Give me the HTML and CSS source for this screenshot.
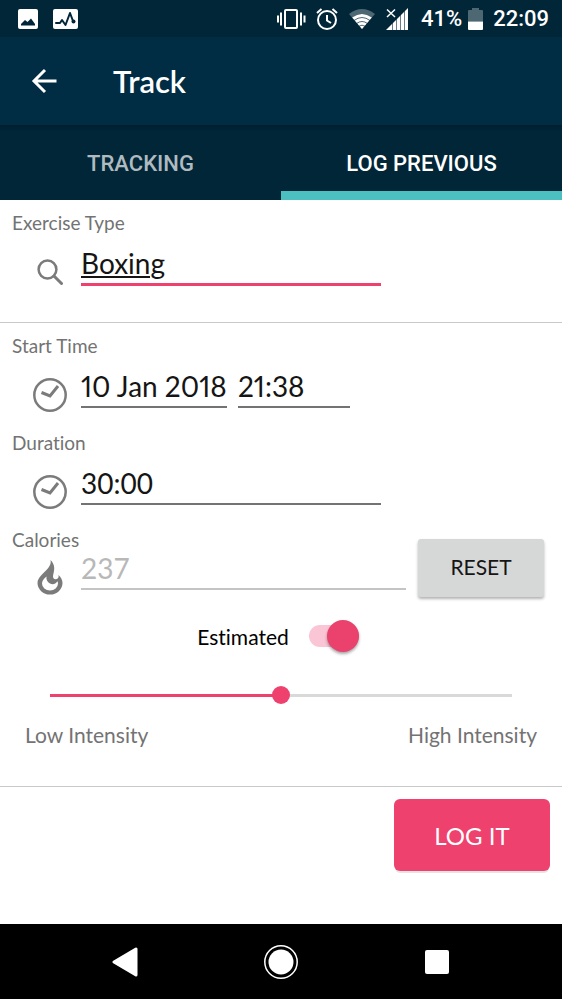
FILE: index.html
```html
<!DOCTYPE html>
<html lang="en">
<head>
<meta charset="utf-8">
<meta name="viewport" content="width=device-width, initial-scale=1">
<title>Track</title>
<link rel="stylesheet" href="styles.css">
</head>
<body>
<div class="screen">
  <div class="status">
    <div class="status-left">
      <svg width="20" height="20" viewBox="0 0 20 20"><rect width="20" height="20" rx="2" fill="#fff"/><path d="M3 16.500v-1.500l4-4 2.500 2 3.500-3.500 4 5.500v1.500z" fill="#002637"/></svg>
      <svg width="25" height="20" viewBox="0 0 25 20"><rect width="25" height="20" rx="2" fill="#fff"/><path d="M3 14h4l2-3 3.500 5L17 4l3 8" fill="none" stroke="#002637" stroke-width="2" stroke-linejoin="round" stroke-linecap="round"/><circle cx="20.500" cy="12.500" r="2" fill="#002637"/></svg>
    </div>
    <div class="status-right">
      <svg width="30" height="24" viewBox="0 0 30 24" fill="none" stroke="#fff" stroke-width="2"><rect x="9" y="3" width="12" height="18" rx="1"/><path d="M5 5.500v13M25 5.500v13M2 8.500v7M28.500 8.500v7"/></svg>
      <svg width="22" height="24" viewBox="0 0 22 24" fill="none" stroke="#fff" stroke-width="2"><circle cx="11" cy="13" r="9"/><path d="M11 8v5.500l4 2.500M1 6l4.500-4M21 6l-4.500-4"/></svg>
      <svg width="28" height="24" viewBox="0 0 28 24"><path d="M1 7Q14-3 27 7L14 22z" fill="#4d6773"/><path d="M4.200 10.500Q14 3.500 23.800 10.500L14 22z" fill="#fff"/><path d="M6 13.500Q14 7.500 22 13.500M8.500 16.500q5.500-4 11 0M11 19.200q3-2 6 0" fill="none" stroke="#002637" stroke-width=".7"/></svg>
      <svg width="24" height="24" viewBox="0 0 24 24"><path d="M0 23L22 1v22z" fill="#fff"/><path d="M6.500 10v13M10.500 8v15M14.500 5v18M18.500 2v21" stroke="#002637" stroke-width=".6"/><path d="M0 0h11v12H0z" fill="#002637"/><path d="M1 2.500l8 7.500M9 2.500l-8 7.500" stroke="#fff" stroke-width="1.500"/></svg>
      <span class="percent">41%</span>
      <svg width="15" height="24" viewBox="0 0 15 24"><path d="M0 14.500V4q0-1 1-1h3V1h7v2h3q1 0 1 1v10.500z" fill="#4d6773"/><path d="M0 14.500h15V22q0 1-1 1H1q-1 0-1-1z" fill="#fff"/></svg>
      <span class="clock">22:09</span>
    </div>
  </div>

  <header class="appbar">
    <button class="back" aria-label="Back">
      <svg width="26" height="26" viewBox="0 0 26 26" fill="none" stroke="#fff" stroke-width="3"><path d="M25.500 13H3M14 2L3 13l11 11"/></svg>
    </button>
    <h1 class="title">Track</h1>
  </header>

  <nav class="tabs">
    <a class="tab" href="#tracking">TRACKING</a>
    <a class="tab tab-active" href="#log">LOG PREVIOUS</a>
  </nav>

  <form class="form">
    <section class="section section-type">
      <label class="label" for="type">Exercise Type</label>
      <div class="row">
        <span class="icon"><svg width="26" height="26" viewBox="0 0 26 26" fill="none" stroke="#7b7b7b" stroke-width="2.500"><circle cx="10.500" cy="10.500" r="8.900"/><path d="M17 17l7.500 7.500" stroke-width="3" stroke-linecap="round"/></svg></span>
        <input class="field field-active" id="type" type="text" value="Boxing">
      </div>
    </section>

    <section class="section section-details">
      <label class="label" for="date">Start Time</label>
      <div class="row">
        <span class="icon"><svg width="34" height="34" viewBox="0 0 34 34" fill="none" stroke="#7b7b7b" stroke-width="2.500"><circle cx="17" cy="17" r="15.700"/><path d="M8.500 14.500l8.500 3.500 8-10" stroke-width="3"/></svg></span>
        <div class="moment">
          <input class="field" id="date" type="text" value="10 Jan 2018">
          <input class="field" type="text" aria-label="Time" value="21:38">
        </div>
      </div>

      <label class="label" for="duration">Duration</label>
      <div class="row">
        <span class="icon"><svg width="34" height="34" viewBox="0 0 34 34" fill="none" stroke="#7b7b7b" stroke-width="2.500"><circle cx="17" cy="17" r="15.700"/><path d="M8.500 14.500l8.500 3.500 8-10" stroke-width="3"/></svg></span>
        <input class="field" id="duration" type="text" value="30:00">
      </div>

      <div class="calories">
        <div class="calories-main">
          <label class="label" for="calories">Calories</label>
          <div class="row row-tight">
            <span class="icon"><svg width="26" height="36" viewBox="0 0 26 36"><path d="M13.500 1C15 7 9 11 4.500 16 2 18.700.5 21 .5 24a12.500 11.500 0 0 0 25 0c0-3-1.500-6-4-8 .5 2.500-.5 4-2.500 4.200-2.500.2-3.500-2-2.800-4.500C17.500 11 18.500 6 13.500 1z" fill="#7b7b7b"/><path d="M9.500 17.500C6.500 20 5 22 5 24.500a8 7 0 0 0 16 0c0-.800-.2-1.600-.5-2.200-2 3-5 3.500-7.500 2.200-2.800-1.500-4-4-3.500-7z" fill="#fff"/></svg></span>
            <input class="field field-muted" id="calories" type="text" placeholder="237" disabled>
          </div>
        </div>
        <button class="reset" type="button">RESET</button>
      </div>

      <label class="estimate">
        <span>Estimated</span>
        <input class="switch" type="checkbox" role="switch" checked>
      </label>

      <input class="slider" type="range" min="0" max="100" value="50" aria-label="Intensity">
      <div class="scale"><span>Low Intensity</span><span>High Intensity</span></div>
    </section>

    <div class="actions">
      <button class="submit" type="button">LOG IT</button>
    </div>
  </form>

  <nav class="navbar">
    <button class="key" aria-label="Back"><svg width="26" height="30" viewBox="0 0 26 30"><path d="M2 15L24 2v26z" fill="#fff" stroke="#fff" stroke-width="3" stroke-linejoin="round"/></svg></button>
    <button class="key" aria-label="Home"><svg width="36" height="36" viewBox="0 0 36 36"><circle cx="18" cy="18" r="16.200" fill="none" stroke="#fff" stroke-width="1.500"/><circle cx="18" cy="18" r="12.500" fill="#fff"/></svg></button>
    <button class="key" aria-label="Overview"><svg width="24" height="24" viewBox="0 0 24 24"><rect width="24" height="24" rx="2" fill="#fff"/></svg></button>
  </nav>
</div>
</body>
</html>
```

FILE: styles.css
```css
* {
  box-sizing: border-box;
}

body {
  margin: 0;
  background: #fff;
  color: #151515;
  font-family: Lato, "Liberation Sans", sans-serif;
  font-variant-ligatures: none;
}

button,
input {
  margin: 0;
  border: 0;
  background: none;
  color: inherit;
  font-family: inherit;
}

svg {
  display: block;
  flex: none;
}

.screen {
  display: flex;
  flex-direction: column;
  min-height: 100vh;
}

.status {
  display: flex;
  justify-content: space-between;
  align-items: center;
  height: 37px;
  padding: 0 13px 0 18px;
  background: #002637;
  color: #fff;
  font: 500 22px Roboto, sans-serif;
}

.status-left {
  display: flex;
  gap: 15px;
}

.status-right {
  display: flex;
  align-items: center;
  gap: 10px;
}

.percent {
  margin-left: 1px;
  margin-right: -4px;
}

.appbar {
  display: flex;
  align-items: center;
  gap: 56px;
  height: 88px;
  padding: 0 31px;
  background: #002d43;
  color: #fff;
}

.back {
  padding: 0;
}

.title {
  margin: 0;
  font-size: 31px;
  line-height: 36px;
  font-weight: 600;
}

.tabs {
  display: flex;
  height: 75px;
  background: linear-gradient(#001f2f, #002637 6px);
}

.tab {
  flex: 1;
  padding-top: 25px;
  border-bottom: 9px solid transparent;
  color: #b0bbc0;
  font: 500 22px/28px Roboto, sans-serif;
  text-align: center;
  text-decoration: none;
}

.tab-active {
  border-bottom-color: #4cbfc1;
  color: #fff;
}

.section {
  padding: 13px 18px 0 12px;
  border-bottom: 1px solid #c8c8c8;
}

.section-type {
  padding-bottom: 36px;
}

.section-details {
  padding-bottom: 39px;
}

.label {
  display: block;
  color: #737373;
  font-size: 19px;
  line-height: 20px;
}

.row {
  display: grid;
  grid-template-columns: 69px minmax(0, 300px);
  margin: 12px 0 25px;
}

.section-type .row {
  margin-bottom: 0;
}

.icon {
  display: flex;
  justify-content: center;
  align-items: center;
  padding: 14px 0 0 7px;
  height: 40px;
}

.field {
  width: 100%;
  height: 40px;
  padding: 0 0 2px;
  border-bottom: 2px solid #737373;
  border-radius: 0;
  outline: 0;
  font-size: 28px;
}

.field-active {
  height: 41px;
  border-bottom: 3px solid #ef416e;
  text-decoration: underline 2px;
  text-underline-offset: 2px;
}

.field-muted {
  border-bottom-color: #c4c4c4;
}

.field-muted::placeholder {
  color: #b8b8b8;
  opacity: 1;
}

.moment {
  display: grid;
  grid-template-columns: 146px 112px;
  gap: 11px;
}

.moment .field {
  font-variant-numeric: proportional-nums;
}

.calories {
  display: flex;
  align-items: flex-end;
  gap: 12px;
}

.calories-main {
  flex: 1;
}

.row-tight {
  grid-template-columns: 69px minmax(0, 1fr);
  margin: 0 0 7px;
}

.reset {
  width: 126px;
  height: 58px;
  padding: 0 0 4px;
  border-radius: 3px;
  background: #d6d8d7;
  box-shadow: 0 2px 3px #0000004d;
  font-size: 21px;
}

.estimate {
  display: flex;
  justify-content: center;
  align-items: center;
  gap: 20px;
  height: 32px;
  margin-top: 23px;
  color: #000;
  font-size: 21px;
}

.switch {
  display: flex;
  justify-content: flex-end;
  align-items: center;
  width: 50px;
  height: 22px;
  border-radius: 11px;
  appearance: none;
  background: #fac5d4;
}

.switch::before {
  content: "";
  width: 32px;
  height: 32px;
  border-radius: 50%;
  background: #ea416d;
  box-shadow: 0 2px 3px #00000059;
}

.slider {
  display: block;
  width: calc(100% - 70px);
  height: 20px;
  margin: 33px 32px 0 38px;
  appearance: none;
}

.slider::-webkit-slider-runnable-track {
  height: 3px;
  background: linear-gradient(to right, #ef416e 50%, #d9d9d9 50%);
}

.slider::-webkit-slider-thumb {
  width: 18px;
  height: 18px;
  margin-top: -8px;
  border-radius: 50%;
  appearance: none;
  background: #ef416e;
}

.scale {
  display: flex;
  justify-content: space-between;
  margin-top: 18px;
  padding: 0 7px 0 13px;
  color: #737373;
  font-size: 21px;
  line-height: 24px;
}

.actions {
  display: flex;
  justify-content: flex-end;
  padding: 12px;
}

.submit {
  width: 156px;
  height: 72px;
  border-radius: 6px;
  background: #ef416e;
  box-shadow: 0 3px 0 -1px #0000001a;
  color: #fff;
  font-size: 24px;
}

.navbar {
  display: flex;
  height: 75px;
  margin-top: auto;
  padding: 0 47px;
  background: #000;
}

.key {
  display: flex;
  flex: 1;
  justify-content: center;
  align-items: center;
  padding: 0;
}
```
